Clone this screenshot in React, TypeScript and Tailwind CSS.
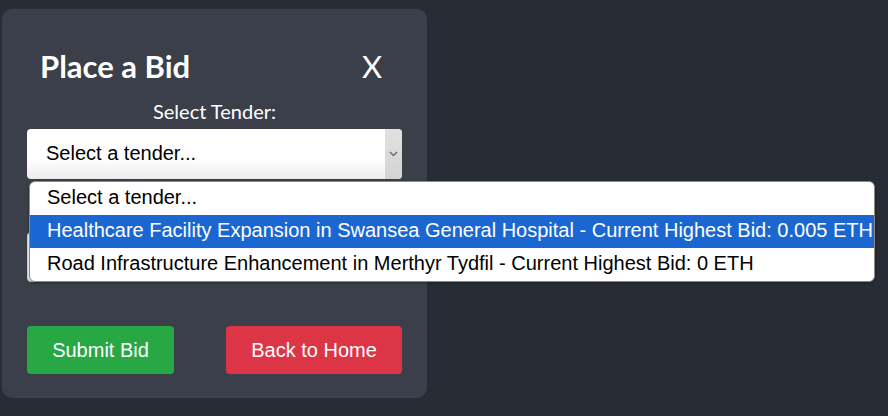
import React from "react";

export default function App() {
  const options = [
    "Select a tender...",
    "Healthcare Facility Expansion in Swansea General Hospital - Current Highest Bid: 0.005 ETH",
    "Road Infrastructure Enhancement in Merthyr Tydfil - Current Highest Bid: 0 ETH",
  ];

  return (
    <main className="w-[888px] h-[416px] bg-[#282c34] pt-[9px] pl-[2px] overflow-hidden">
      <div className="relative w-[425px] h-[389px] rounded-[10px] bg-[#3b3f4a] px-[25px] pt-[40px]">
        {/* HEADER */}
        <div className="flex h-[34px] items-center justify-between pl-[13px] pr-[20px]">
          <h2 className="text-[31px] font-bold text-white font-['Lato',sans-serif]">Place a Bid</h2>
          <span className="text-[31px] text-white font-['Lato',sans-serif]">X</span>
        </div>

        <p className="mt-[16px] h-[24px] text-center text-[20px] leading-[24px] text-white font-['Lato',sans-serif]">
          Select Tender:
        </p>

        {/* SELECT (closed look) */}
        <div className="mt-[6px] flex h-[50px] overflow-hidden rounded-[4px] bg-gradient-to-b from-white from-60% to-[#ececec]">
          <div className="flex flex-1 items-center pb-[3px] pl-[19px] text-[20px] text-black font-['Liberation_Sans',Arial,sans-serif]">
            Select a tender...
          </div>
          <div className="flex w-[17px] items-center justify-center bg-gradient-to-b from-[#e1e1e1] to-[#d3d3d3]">
            <svg width="9" height="6" viewBox="0 0 9 6">
              <path d="M1 1l3.5 3.5L8 1" fill="none" stroke="#6e6e6e" strokeWidth="1.5" />
            </svg>
          </div>
        </div>

        {/* bid amount field, mostly hidden under the open list */}
        <div className="mt-[53px] h-[50px] rounded-[4px] border border-[#ced4da] bg-white"></div>

        {/* BUTTONS */}
        <div className="mt-[44px] flex justify-between">
          <button className="h-[48px] w-[147px] rounded-[4px] bg-[#28a745] pb-[1px] text-[20px] text-white font-['Liberation_Sans',Arial,sans-serif]">
            Submit Bid
          </button>
          <button className="h-[48px] w-[176px] rounded-[4px] bg-[#dc3545] pb-[1px] text-[20px] text-white font-['Liberation_Sans',Arial,sans-serif]">
            Back to Home
          </button>
        </div>

        {/* OPEN DROPDOWN LIST */}
        <ul className="absolute left-[27px] top-[172px] w-[846px] overflow-hidden rounded-[6px] border border-[#8a8a8a] bg-white shadow-[0_1px_3px_rgba(0,0,0,0.35)] font-['Liberation_Sans',Arial,sans-serif]">
          {options.map((opt, i) => (
            <li
              key={i}
              className={
                i === 1
                  ? "flex h-[33px] items-center whitespace-nowrap bg-[#1a67d2] pb-[3px] pl-[17px] text-[20px] text-white"
                  : "flex h-[33px] items-center whitespace-nowrap pb-[3px] pl-[17px] text-[20px] text-black"
              }
            >
              {opt}
            </li>
          ))}
        </ul>
      </div>
    </main>
  );
}
